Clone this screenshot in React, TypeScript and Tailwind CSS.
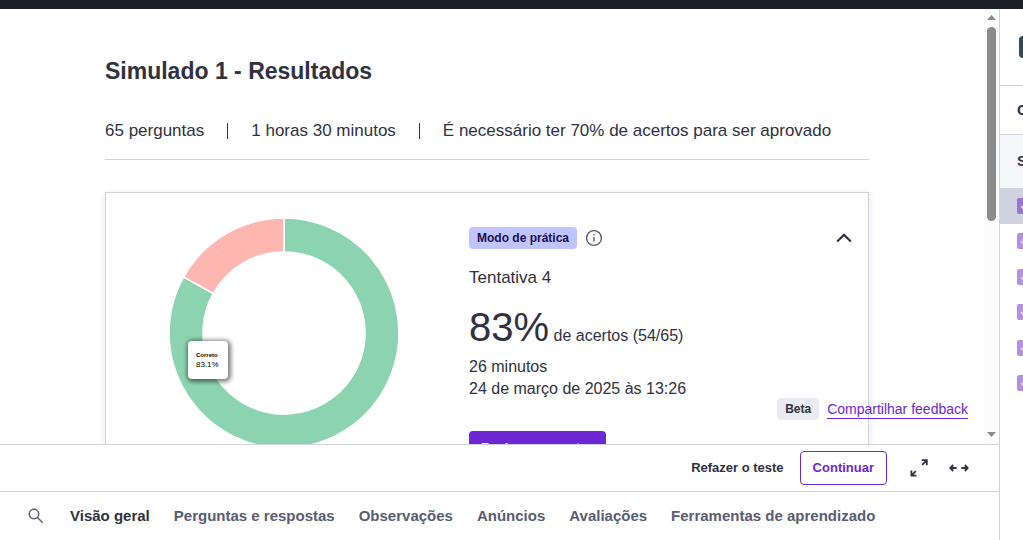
import type { ReactNode } from "react";

const facts = [
  "65 perguntas",
  "1 horas 30 minutos",
  "É necessário ter 70% de acertos para ser aprovado",
];

const tabs = [
  "Visão geral",
  "Perguntas e respostas",
  "Observações",
  "Anúncios",
  "Avaliações",
  "Ferramentas de aprendizado",
];

const lessons = [1, 2, 3, 4, 5, 6];

function ScoreChart() {
  return (
    <div className="relative size-[230px] shrink-0">
      <svg viewBox="-115 -115 230 230" className="size-full" role="img" aria-label="83.1%">
        <path
          d="M0 -115A115 115 0 1 1 -100.4 -56.1L-70.7 -39.5A81 81 0 1 0 0 -81Z"
          fill="#8cd4b0"
          stroke="#fff"
          strokeWidth="1.6"
        />
        <path
          d="M-100.4 -56.1A115 115 0 0 1 0 -115V-81A81 81 0 0 0 -70.7 -39.5Z"
          fill="#feb6b0"
          stroke="#fff"
          strokeWidth="1.6"
        />
      </svg>
      <div className="absolute top-[123px] left-[19px] flex h-[38px] w-10 flex-col justify-center rounded bg-white pl-2 text-black shadow-[1px_1px_4px_2px_rgba(0,0,0,0.5)]">
        <span className="text-[6px] leading-[10px] font-bold">Correto</span>
        <span className="text-[8px] leading-[10px]">83.1%</span>
      </div>
    </div>
  );
}

function IconButton({ label, children }: { label: string; children: ReactNode }) {
  return (
    <button type="button" aria-label={label} className="flex size-5 shrink-0 items-center justify-center">
      {children}
    </button>
  );
}

function Results() {
  return (
    <div className="min-w-0 flex-1 pr-[115px] pl-[105px]">
      <h1 className="pt-[46px] text-[23px] leading-8 font-bold">Simulado 1 - Resultados</h1>
      <ul className="mt-[31px] flex items-center border-b border-[#d1d2e0] pb-[15px] text-[17px] leading-[26px] whitespace-nowrap">
        {facts.map((fact, i) => (
          <li key={fact} className="flex items-center">
            {i > 0 && <span className="mx-[23px] h-4 w-px bg-[#303141]" />}
            {fact}
          </li>
        ))}
      </ul>
      <section className="mt-8 flex gap-[70px] border border-[#d1d2e0] pt-[25px] pr-4 pb-16 pl-[63px] shadow-[0_2px_8px_rgba(6,17,118,0.1)]">
        <ScoreChart />
        <div className="min-w-0 flex-1 pt-[9px]">
          <div className="flex h-[22px] items-center gap-2">
            <span className="rounded bg-[#c0c4fc] px-2 text-xs leading-[22px] font-bold text-[#180e55]">
              Modo de prática
            </span>
            <IconButton label="Informações">
              <svg viewBox="0 0 20 20" className="size-5" fill="none" stroke="#595c73" strokeWidth="1.4">
                <circle cx="9" cy="10" r="7.4" />
                <path d="M9 9v4.5M9 6v1.5" />
              </svg>
            </IconButton>
            <button type="button" aria-label="Recolher" className="ml-auto flex size-4 items-center justify-center">
              <svg viewBox="0 0 16 16" className="size-4" fill="none" stroke="#303141" strokeWidth="2.2">
                <path d="M1.2 11.5 8 4.7l6.8 6.8" />
              </svg>
            </button>
          </div>
          <h2 className="mt-4 text-[17px] leading-[26px]">Tentativa 4</h2>
          <p className="mt-4 text-base leading-10">
            <span className="text-[40px]">83%</span> de acertos (54/65)
          </p>
          <p className="text-base leading-[22px]">26 minutos</p>
          <p className="text-base leading-[22px]">24 de março de 2025 às 13:26</p>
          <button
            type="button"
            className="mt-[31px] h-[34px] rounded bg-[#6d28d2] px-3 text-[13px] font-bold whitespace-nowrap text-white"
          >
            Revisar perguntas
          </button>
        </div>
      </section>
    </div>
  );
}

function ScrollTrack() {
  return (
    <div className="flex w-[15px] shrink-0 flex-col items-center bg-[#fbfbfb] pt-[6px] pb-[7px]">
      <svg viewBox="0 0 9 5" className="h-[5px] w-[9px]" fill="#8b8b8b">
        <path d="M0 5 4.5 0 9 5Z" />
      </svg>
      <div className="mt-[7px] h-[194px] w-[9px] rounded-full bg-[#8b8b8b]" />
      <svg viewBox="0 0 9 5" className="mt-auto h-[5px] w-[9px]" fill="#8b8b8b">
        <path d="M0 0 4.5 5 9 0Z" />
      </svg>
    </div>
  );
}

function Actions() {
  return (
    <div className="flex h-12 shrink-0 items-center justify-end border-y border-[#d1d2e0] bg-white pr-[30px] text-[13px] font-bold">
      <button type="button">Refazer o teste</button>
      <button
        type="button"
        className="ml-4 h-[34px] rounded border border-[#6d28d2] px-3 text-[#6d28d2]"
      >
        Continuar
      </button>
      <div className="ml-[22px] flex gap-5">
        <IconButton label="Tela cheia">
          <svg viewBox="0 0 20 20" className="size-5" fill="none" stroke="#303141" strokeWidth="1.8">
            <path d="M12.8 2.2h5v5M17.6 2.4l-4.4 4.4M2.4 12.6v5h5M2.6 17.4l4.2-4.2" />
          </svg>
        </IconButton>
        <IconButton label="Visualização ampliada">
          <svg viewBox="0 0 20 20" className="size-5" fill="none" stroke="#303141" strokeWidth="1.8">
            <path d="M7.6 10H1.4M4.2 7 1.3 10l2.9 3M12.4 10h6.2M15.8 7l2.9 3-2.9 3" />
          </svg>
        </IconButton>
      </div>
    </div>
  );
}

function Tabs() {
  return (
    <nav className="flex h-12 shrink-0 items-center gap-6 bg-white pl-[26px] text-[15px] font-bold whitespace-nowrap text-[#595c73]">
      <IconButton label="Pesquisar">
        <svg viewBox="0 0 20 20" className="size-5" fill="none" stroke="#595c73" strokeWidth="1.5">
          <circle cx="8" cy="8" r="4.7" />
          <path d="m11.5 11.5 5.2 5.2" />
        </svg>
      </IconButton>
      {tabs.map((tab, i) => (
        <a key={tab} href="#" className={i === 0 ? "text-[#303141]" : ""}>
          {tab}
        </a>
      ))}
    </nav>
  );
}

function Sidebar() {
  return (
    <aside className="w-6 shrink-0 overflow-hidden border-l border-[#d1d2e0] bg-white">
      <div className="flex h-[76px] items-center pl-[19px]">
        <span className="h-[22px] w-5 shrink-0 rounded bg-[#344b56]" />
      </div>
      <div className="flex h-[50px] items-center border-y border-[#d1d2e0] pl-[17px] text-[15px] font-bold">C</div>
      <div className="flex h-[53px] items-center bg-[#f6f7f9] pl-[17px] text-[15px] font-bold">S</div>
      <ul className="grid h-[213px] auto-rows-fr">
        {lessons.map((lesson, i) => (
          <li
            key={lesson}
            className={i === 0 ? "flex items-center bg-[#d1d2e0] pl-[17px]" : "flex items-center pl-[17px]"}
          >
            <svg
              viewBox="0 0 16 16"
              className={i === 0 ? "size-4 shrink-0 text-[#9c72d9]" : "size-4 shrink-0 text-[#b48fe4]"}
            >
              <rect width="16" height="16" rx="2" fill="currentColor" />
              <path d="m4 8 3 3 5-6" fill="none" stroke="#e6d9f7" strokeWidth="1.6" />
            </svg>
          </li>
        ))}
      </ul>
    </aside>
  );
}

export default function App() {
  return (
    <div className="flex h-screen flex-col overflow-hidden bg-white font-['Liberation_Sans',Arial,sans-serif] text-[#303141]">
      <header className="h-[9px] shrink-0 bg-[#1d1e27]" />
      <div className="flex min-h-0 flex-1">
        <main className="flex min-w-0 flex-1 flex-col">
          <div className="relative flex min-h-0 flex-1 overflow-hidden">
            <Results />
            <ScrollTrack />
            <div className="absolute right-[31px] bottom-6 flex items-center gap-2 text-sm whitespace-nowrap">
              <span className="rounded bg-[#e9eaf2] px-2 text-xs leading-[22px] font-bold">Beta</span>
              <a href="#" className="border-b border-[#6d28d2] leading-[18px] text-[#6d28d2]">
                Compartilhar feedback
              </a>
            </div>
          </div>
          <Actions />
          <Tabs />
        </main>
        <Sidebar />
      </div>
    </div>
  );
}
